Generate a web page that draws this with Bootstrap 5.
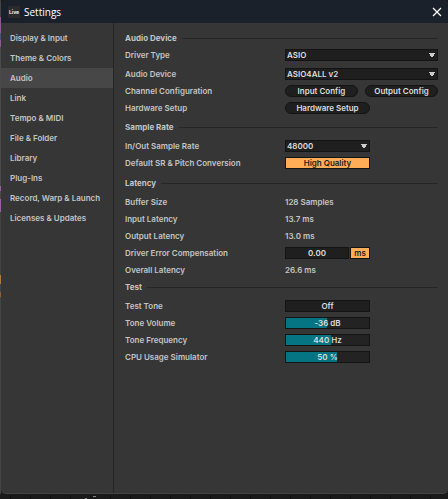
<!DOCTYPE html>
<html lang="en">
<head>
<meta charset="utf-8">
<meta name="viewport" content="width=device-width, initial-scale=1">
<title>Settings</title>
<link href="https://cdn.jsdelivr.net/npm/bootstrap@5.3.0/dist/css/bootstrap.min.css" rel="stylesheet">
<style>
  :root { --panel: #363636; --ink: #c4c4c4; --well: #1f1f1f; --edge: #141414; --amber: #ffad56; --teal: #057584; }
  body { font: 600 8px/12px Inter, "Liberation Sans", sans-serif; color: var(--ink); background: #1a1a1a; }
  .backdrop {
    padding: 0 0 5px 1px;
    background:
      linear-gradient(#8a8a8a, #8a8a8a) 93px calc(100% - 2px) / 3px 1px no-repeat,
      linear-gradient(#8a8a8a, #8a8a8a) 85px 100% / 2px 1px no-repeat,
      repeating-linear-gradient(90deg, #111 0 1px, transparent 1px 20px) 10px 100% / 100% 4px no-repeat,
      linear-gradient(#444 0 17px, #8d5a96 17px 33px, #4b5378 33px 40px, #8d5a96 40px 47px, #4a4a4a 47px 186px, #9a5fa3 186px 191px, #4a4a4a 191px 199px, #9a5fa3 199px 212px, #444 212px 275px, #b07a3c 275px 284px, #444 284px 292px, #8a6238 292px 297px, #454545 297px) 0 0 / 1px calc(100% - 5px) no-repeat,
      #1a1a1a;
  }
  .app-window { background: var(--panel); border-bottom: 1px solid #444; border-radius: 5px; overflow: hidden; }
  .titlebar { height: 23px; padding: 0 6px 0 7px; background: #1a212b; color: #fff; }
  .titlebar h1 { font: 400 10px/14px "Open Sans", "Noto Sans", sans-serif; }
  .app-mark { width: 12px; height: 12px; background: #2b2b2d; font: 700 5px/12px Inter, sans-serif; color: #eee; }
  .close-x { width: 10px; height: 10px; color: #fff; }
  .side { width: 113px; padding-top: 5px; border-right: 1px solid #262626; }
  .side .nav-link { padding: 4px 9px; color: var(--ink); line-height: 12px; }
  .side .nav-link.active { background: #474747; }
  .pane { padding: 8px 10px 8px 11px; }
  .group { margin-bottom: 4px; }
  .group.roomy { margin-bottom: 5px; }
  .group.tight { margin-bottom: 2px; }
  .group h2 { font-size: 8px; line-height: 14px; font-weight: 700; gap: 5px; }
  .group h2::after { content: ""; flex: 1; height: 1px; background: #262626; }
  .rows { padding-top: 3px; }
  .rows.snug { padding-top: 1px; }
  .setting { height: 17px; }
  .setting.spaced { margin-bottom: 2px; }
  .setting > :first-child { width: 160px; flex: none; }
  .field { height: 12px; min-width: 0; font: inherit; color: #dcdcdc; background-color: var(--well); border: 1px solid var(--edge); border-radius: 0; padding: 0; line-height: 10px; }
  .narrow { width: 85px; }
  select.field { appearance: none; padding-left: 1px; background-image: conic-gradient(from -31deg at 50% 100%, #ccc 62deg, transparent 62deg); background-size: 6px 5px; background-position: right 2px top 3px; background-repeat: no-repeat; }
  .pair { gap: 7px; }
  .pill { border-radius: 6px; }
  .field.lit { background-color: var(--amber); color: #1c1c1c; }
  .with-unit { gap: 1px; }
  .unit { width: 20px; flex: none; }
  .level { position: relative; }
  .level input { appearance: none; display: block; width: 100%; height: 12px; margin: 0; border: 1px solid var(--edge); background: linear-gradient(90deg, var(--teal) var(--fill), #232323 var(--fill)); }
  .level input::-webkit-slider-thumb { appearance: none; width: 1px; height: 10px; background: transparent; }
  .level output { position: absolute; inset: 0; line-height: 12px; text-align: center; color: #dcdcdc; pointer-events: none; }
</style>
<script src="https://cdn.jsdelivr.net/npm/bootstrap@5.3.0/dist/js/bootstrap.bundle.min.js"></script>
</head>
<body>
<div class="backdrop min-vh-100 d-flex flex-column">
  <div class="app-window flex-grow-1 d-flex flex-column">
    <header class="titlebar d-flex align-items-center">
      <span class="app-mark text-center me-1">Live</span>
      <h1 class="m-0 me-auto">Settings</h1>
      <button type="button" class="btn close-x border-0 p-0 d-flex" aria-label="Close"><svg width="10" height="10" viewBox="0 0 10 10" fill="none" stroke="currentColor" stroke-width="1.2"><path d="M1 1l8 8M9 1L1 9"/></svg></button>
    </header>
    <div class="d-flex flex-grow-1">
      <nav class="side flex-shrink-0 nav flex-column flex-nowrap" aria-label="Settings pages">
        <a class="nav-link" href="#display">Display &amp; Input</a>
        <a class="nav-link" href="#theme">Theme &amp; Colors</a>
        <a class="nav-link active" aria-current="page" href="#audio">Audio</a>
        <a class="nav-link" href="#link">Link</a>
        <a class="nav-link" href="#tempo">Tempo &amp; MIDI</a>
        <a class="nav-link" href="#file">File &amp; Folder</a>
        <a class="nav-link" href="#library">Library</a>
        <a class="nav-link" href="#plugins">Plug-Ins</a>
        <a class="nav-link" href="#record">Record, Warp &amp; Launch</a>
        <a class="nav-link" href="#licenses">Licenses &amp; Updates</a>
      </nav>
      <main class="pane flex-grow-1" id="audio">
        <section class="group">
          <h2 class="d-flex align-items-center m-0">Audio Device</h2>
          <div class="rows snug">
            <div class="setting spaced d-flex align-items-center"><label for="driver">Driver Type</label><select class="field flex-grow-1" id="driver"><option>ASIO</option></select></div>
            <div class="setting d-flex align-items-center"><label for="device">Audio Device</label><select class="field flex-grow-1" id="device"><option>ASIO4ALL v2</option></select></div>
            <div class="setting d-flex align-items-center"><span>Channel Configuration</span><div class="pair d-flex flex-grow-1"><button type="button" class="field pill w-50">Input Config</button><button type="button" class="field pill w-50">Output Config</button></div></div>
            <div class="setting d-flex align-items-center"><span>Hardware Setup</span><button type="button" class="field pill narrow">Hardware Setup</button></div>
          </div>
        </section>
        <section class="group roomy">
          <h2 class="d-flex align-items-center m-0">Sample Rate</h2>
          <div class="rows">
            <div class="setting d-flex align-items-center"><label for="rate">In/Out Sample Rate</label><select class="field narrow" id="rate"><option>48000</option></select></div>
            <div class="setting d-flex align-items-center"><span>Default SR &amp; Pitch Conversion</span><button type="button" class="field lit narrow" aria-pressed="true">High Quality</button></div>
          </div>
        </section>
        <section class="group tight">
          <h2 class="d-flex align-items-center m-0">Latency</h2>
          <div class="rows">
            <div class="setting d-flex align-items-center"><span>Buffer Size</span><span>128 Samples</span></div>
            <div class="setting d-flex align-items-center"><span>Input Latency</span><span>13.7 ms</span></div>
            <div class="setting d-flex align-items-center"><span>Output Latency</span><span>13.0 ms</span></div>
            <div class="setting d-flex align-items-center"><label for="comp">Driver Error Compensation</label><div class="with-unit d-flex narrow"><input class="field text-center flex-fill w-50" id="comp" value="0.00"><button type="button" class="field lit unit">ms</button></div></div>
            <div class="setting d-flex align-items-center"><span>Overall Latency</span><span>26.6 ms</span></div>
          </div>
        </section>
        <section class="group">
          <h2 class="d-flex align-items-center m-0">Test</h2>
          <div class="rows">
            <div class="setting d-flex align-items-center"><span>Test Tone</span><button type="button" class="field narrow" aria-pressed="false">Off</button></div>
            <div class="setting d-flex align-items-center"><label for="vol">Tone Volume</label><div class="level narrow"><input type="range" id="vol" min="-72" max="0" value="-36" style="--fill:49%"><output for="vol">-36 dB</output></div></div>
            <div class="setting d-flex align-items-center"><label for="freq">Tone Frequency</label><div class="level narrow"><input type="range" id="freq" min="20" max="800" value="440" style="--fill:54%"><output for="freq">440 Hz</output></div></div>
            <div class="setting d-flex align-items-center"><label for="cpu">CPU Usage Simulator</label><div class="level narrow"><input type="range" id="cpu" min="0" max="80" value="50" style="--fill:62%"><output for="cpu">50 %</output></div></div>
          </div>
        </section>
      </main>
    </div>
  </div>
</div>
</body>
</html>
